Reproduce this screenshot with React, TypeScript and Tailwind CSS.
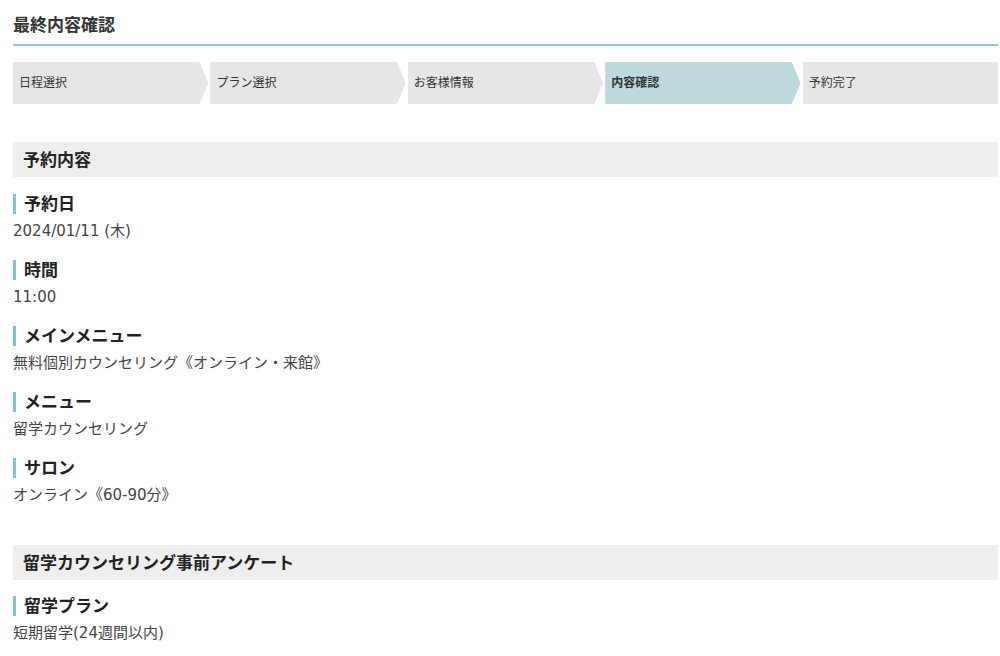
const steps = ["日程選択", "プラン選択", "お客様情報", "内容確認", "予約完了"];
const activeStep = 3;

const items = [
	{ label: "予約日", value: "2024/01/11 (木)" },
	{ label: "時間", value: "11:00" },
	{ label: "メインメニュー", value: "無料個別カウンセリング《オンライン・来館》" },
	{ label: "メニュー", value: "留学カウンセリング" },
	{ label: "サロン", value: "オンライン《60-90分》" },
];

const valueFont = { fontFamily: '"DejaVu Sans", "Noto Sans CJK JP", sans-serif' };

const Item = ({ label, value, first }: { label: string; value: string; first?: boolean }) => {
	return (
		<div className={first ? "mt-[17px]" : "mt-[18px]"}>
			<div className="border-l-[3px] border-[#7fc4d6] pl-2 text-[17px] font-bold leading-[20px] text-[#222]">
				{label}
			</div>
			<div className="mt-[6px] text-[15px] leading-[22px] text-[#444]" style={valueFont}>
				{value}
			</div>
		</div>
	);
};

export default function App() {
	return (
		<div
			className="min-h-[656px] bg-white px-[13px] pt-[14px] pr-[2px]"
			style={{ fontFamily: '"Noto Sans", "Noto Sans CJK JP", sans-serif' }}
		>
			{/* Page title */}
			<div className="border-b-2 border-[#8ccad3] pb-[8px] text-[17px] font-bold leading-[22px] text-[#333]">
				最終内容確認
			</div>

			{/* Step bar */}
			<div className="mt-[16px] flex h-[42px] gap-[2px]">
				{steps.map((s, i) => (
					<div
						key={s}
						className={`flex flex-1 items-center pl-[6px] text-[12px] text-[#333] ${
							i === activeStep ? "bg-[#bcd9dd] font-bold" : "bg-[#e6e6e6]"
						} ${
							i === steps.length - 1
								? ""
								: "[clip-path:polygon(0_0,calc(100%-9px)_0,100%_50%,calc(100%-9px)_100%,0_100%)]"
						}`}
					>
						{s}
					</div>
				))}
			</div>

			{/* 予約内容 */}
			<div className="mt-[38px] h-[35px] bg-[#eeeeee] pl-[10px] text-[17px] font-bold leading-[35px] text-[#222]">
				予約内容
			</div>
			{items.map((it, i) => (
				<Item key={it.label} label={it.label} value={it.value} first={i === 0} />
			))}

			{/* アンケート */}
			<div className="mt-[39px] h-[35px] bg-[#eeeeee] pl-[10px] text-[17px] font-bold leading-[35px] text-[#222]">
				留学カウンセリング事前アンケート
			</div>
			<div className="mt-[16px]">
				<div className="border-l-[3px] border-[#7fc4d6] pl-2 text-[17px] font-bold leading-[20px] text-[#222]">
					留学プラン
				</div>
				<div className="mt-[6px] text-[15px] leading-[22px] text-[#444]" style={valueFont}>
					短期留学(24週間以内)
				</div>
			</div>
		</div>
	);
}
